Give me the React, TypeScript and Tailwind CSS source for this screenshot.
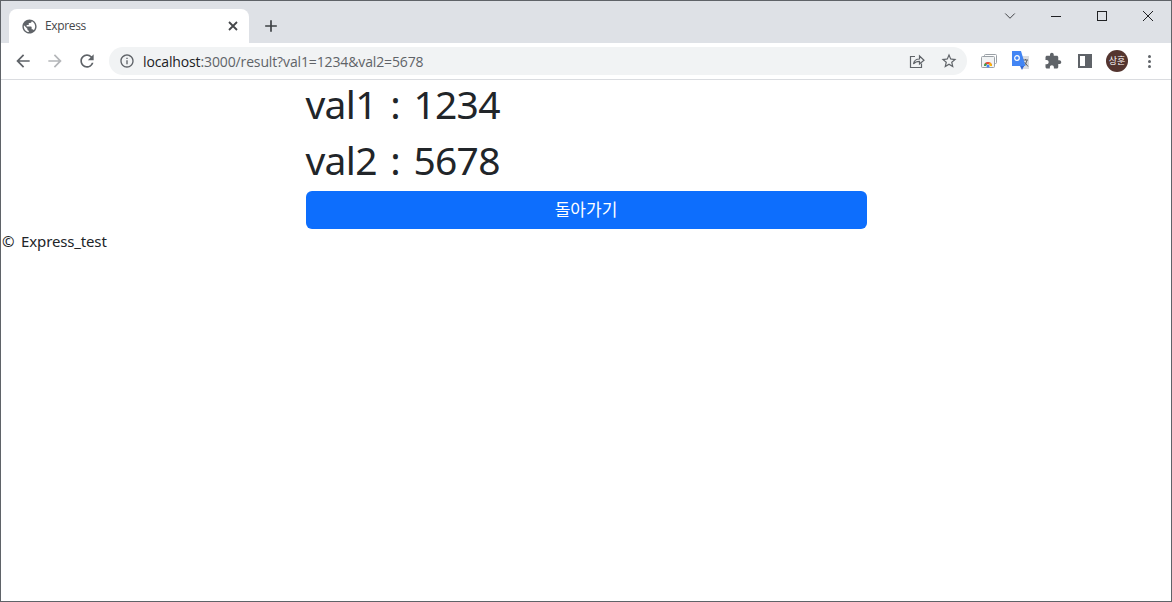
import { ChevronDown } from 'lucide-react'

const uiFont = "font-['Noto_Sans','Noto_Sans_CJK_KR',sans-serif]"

// material paths, same ones chrome draws in its toolbar
function Mat({ d, size, className }: { d: string; size: number; className?: string }) {
  return (
    <svg width={size} height={size} viewBox="0 0 24 24" fill="currentColor" className={`shrink-0 ${className ?? ''}`}>
      <path d={d} />
    </svg>
  )
}

const icons = {
  back: 'M20 11H7.83l5.59-5.59L12 4l-8 8 8 8 1.41-1.41L7.83 13H20v-2z',
  forward: 'M12 4l-1.41 1.41L16.17 11H4v2h12.17l-5.58 5.59L12 20l8-8z',
  reload: 'M17.65 6.35A7.958 7.958 0 0 0 12 4c-4.42 0-7.99 3.58-7.99 8s3.57 8 7.99 8c3.73 0 6.84-2.55 7.73-6h-2.08A5.99 5.99 0 0 1 12 18c-3.31 0-6-2.69-6-6s2.69-6 6-6c1.66 0 3.14.69 4.22 1.78L13 11h7V4l-2.35 2.35z',
  info: 'M11 7h2v2h-2zm0 4h2v6h-2zm1-9C6.48 2 2 6.48 2 12s4.48 10 10 10 10-4.48 10-10S17.52 2 12 2zm0 18c-4.41 0-8-3.59-8-8s3.59-8 8-8 8 3.59 8 8-3.59 8-8 8z',
  star: 'M22 9.24l-7.19-.62L12 2 9.19 8.63 2 9.24l5.46 4.73L5.82 21 12 17.27 18.18 21l-1.63-7.03L22 9.24zM12 15.4l-3.76 2.27 1-4.28-3.32-2.88 4.38-.38L12 6.1l1.71 4.04 4.38.38-3.32 2.88 1 4.28L12 15.4z',
  puzzle: 'M20.5 11H19V7c0-1.1-.9-2-2-2h-4V3.5C13 2.12 11.88 1 10.5 1S8 2.12 8 3.5V5H4c-1.1 0-1.99.9-1.99 2v3.8H3.5c1.49 0 2.7 1.21 2.7 2.7s-1.21 2.7-2.7 2.7H2V20c0 1.1.9 2 2 2h3.8v-1.5c0-1.49 1.21-2.7 2.7-2.7 1.49 0 2.7 1.21 2.7 2.7V22H17c1.1 0 2-.9 2-2v-4h1.5c1.38 0 2.5-1.12 2.5-2.5S21.88 11 20.5 11z',
  globe: 'M12 2C6.48 2 2 6.48 2 12s4.48 10 10 10 10-4.48 10-10S17.52 2 12 2zm-1 17.93c-3.95-.49-7-3.85-7-7.93 0-.62.08-1.21.21-1.79L9 15v1c0 1.1.9 2 2 2v1.93zm6.9-2.54c-.26-.81-1-1.39-1.9-1.39h-1v-3c0-.55-.45-1-1-1H8v-2h2c.55 0 1-.45 1-1V7h2c1.1 0 2-.9 2-2v-.41c2.93 1.19 5 4.06 5 7.41 0 2.08-.8 3.97-2.1 5.39z',
  plus: 'M19 13h-6v6h-2v-6H5v-2h6V5h2v6h6v2z',
}

function TabStrip() {
  return (
    <div className="flex h-[42px] bg-[#dee1e6] shrink-0">
      <div className="ml-[8px] mt-[8px] w-[240px] h-[34px] bg-white rounded-t-[8px] flex items-center pl-[12px] pr-[11px]">
        <Mat d={icons.globe} size={17} className="text-[#5f6368]" />
        <span className="ml-[7px] flex-1 text-[12px] tracking-[-0.35px] text-[#45474a] font-['Open_Sans',sans-serif]">Express</span>
        <svg width="10" height="10" viewBox="0 0 10 10" className="shrink-0">
          <path d="M1 1 L9 9 M9 1 L1 9" stroke="#45474a" strokeWidth="1.8" />
        </svg>
      </div>
      <div className="ml-[12px] mt-[15px] h-[20px]">
        <Mat d={icons.plus} size={20} className="text-[#3c4043]" />
      </div>
      <div className="flex-1" />
      <div className="flex items-start text-[#202124]">
        <div className="w-[46px] h-[30px] flex items-center justify-center"><ChevronDown size={18} strokeWidth={1.1} /></div>
        <div className="w-[46px] h-[30px] flex items-center justify-center"><div className="w-[10px] h-[1px] bg-[#202124]" /></div>
        <div className="w-[46px] h-[30px] flex items-center justify-center"><div className="w-[10px] h-[10px] border border-[#202124]" /></div>
        <div className="w-[46px] h-[30px] flex items-center justify-center">
          <svg width="12" height="12" viewBox="0 0 12 12"><path d="M1 1 L11 11 M11 1 L1 11" stroke="#202124" strokeWidth="1" /></svg>
        </div>
      </div>
    </div>
  )
}

function Toolbar() {
  return (
    <div className="flex items-center h-[37px] bg-white border-b border-[#dadce0] shrink-0 pl-[12px]">
      <Mat d={icons.back} size={20} className="text-[#5f6368]" />
      <Mat d={icons.forward} size={20} className="ml-[12px] text-[#b4b6b9]" />
      <Mat d={icons.reload} size={20} className="ml-[12px] text-[#5f6368]" />
      <div className="ml-[12px] w-[858px] h-[28px] rounded-full bg-[#f1f3f4] flex items-center pl-[10px] pr-[9px]">
        <Mat d={icons.info} size={16} className="text-[#5f6368]" />
        <span className="ml-[8px] flex-1 text-[14px] tracking-[-0.13px] text-[#5f6368] font-['Open_Sans',sans-serif]">
          <span className="text-[#202124]">localhost</span>:3000/result?val1=1234&amp;val2=5678
        </span>
        <svg width="16" height="16" viewBox="0 0 16 16" fill="none" stroke="#5f6368" strokeWidth="1.2" className="shrink-0">
          <path d="M6 3.5 H1.5 V14.5 H12.5 V10.5" />
          <path d="M4.5 11 C5 7.5 7.5 6 10.5 6 V3 L15 7.2 L10.5 11 V8.3 C8 8.3 6 9 4.5 11 Z" />
        </svg>
        <Mat d={icons.star} size={18} className="ml-[15px] text-[#5f6368]" />
      </div>
      <div className="ml-[14px] flex items-center">
        {/* stacked windows with the chrome colours */}
        <svg width="16" height="16" viewBox="0 0 16 16" className="shrink-0">
          <rect x="3.5" y="1.5" width="12" height="9" rx="1" fill="#fff" stroke="#9aa0a6" />
          <rect x="0.5" y="3.5" width="13" height="11" rx="1" fill="#f1f3f4" stroke="#9aa0a6" />
          <path d="M3 13 A4 4 0 0 1 11 13 H9 A2 2 0 0 0 5 13 Z" fill="#ea4335" />
          <path d="M3 13 A4 4 0 0 1 4.5 10 L6 11.5 A2 2 0 0 0 5 13 Z" fill="#34a853" />
          <path d="M9 13 A2 2 0 0 0 7.5 11 L9 9.5 A4 4 0 0 1 11 13 Z" fill="#fbbc05" />
          <circle cx="7" cy="13" r="1.5" fill="#4285f4" />
        </svg>
        {/* translate */}
        <svg width="18" height="20" viewBox="0 0 18 20" className="ml-[15px] shrink-0">
          <path d="M8 5 H17 V18 H9 Z" fill="#dadce0" />
          <path d="M11 9 H16 M13.5 8 V9 M15 9 C14.5 12 13 14 11 15.5 M12.5 11 L16 15.5" stroke="#5f6368" strokeWidth="1" fill="none" />
          <path d="M0 0 H9 L13.5 15 H0 Z" fill="#4285f4" />
          <path d="M8 15 H12 L10 19 Z" fill="#3367d6" />
          <circle cx="5" cy="7" r="2.3" fill="none" stroke="#fff" strokeWidth="1.2" />
        </svg>
        <Mat d={icons.puzzle} size={18} className="ml-[14px] text-[#5f6368]" />
        <div className="ml-[16px] w-[14px] h-[14px] border-[2px] border-[#5f6368] border-r-[7px]" />
        <div className="ml-[14px] w-[22px] h-[22px] rounded-full bg-[#54352f] text-white text-[9px] flex items-center justify-center font-['Noto_Sans_CJK_KR',sans-serif]">상훈</div>
        <div className="ml-[20px] flex flex-col gap-[2px]">
          <div className="w-[3px] h-[3px] rounded-full bg-[#5f6368]" />
          <div className="w-[3px] h-[3px] rounded-full bg-[#5f6368]" />
          <div className="w-[3px] h-[3px] rounded-full bg-[#5f6368]" />
        </div>
      </div>
    </div>
  )
}

export default function App() {
  return (
    <div className={`w-[1172px] h-[602px] border border-[#5f6368] flex flex-col overflow-hidden bg-white ${uiFont}`}>
      <TabStrip />
      <Toolbar />
      <main className="flex-1 bg-white text-[#212529]">
        <div className="mx-auto w-[561px]">
          <h1 className="text-[39px] leading-[48px] mb-[8px] font-normal tracking-[-0.7px] [word-spacing:4px]">val1 : 1234</h1>
          <h1 className="text-[39px] leading-[48px] mb-[7px] font-normal tracking-[-0.7px] [word-spacing:4px]">val2 : 5678</h1>
          <button className="w-full h-[38px] rounded-[6px] bg-[#0d6efd] text-white text-[17px]">돌아가기</button>
        </div>
        <footer className="pl-[1px] text-[15px] leading-[24px] tracking-[-0.15px] [word-spacing:3px]">© Express_test</footer>
      </main>
    </div>
  )
}
